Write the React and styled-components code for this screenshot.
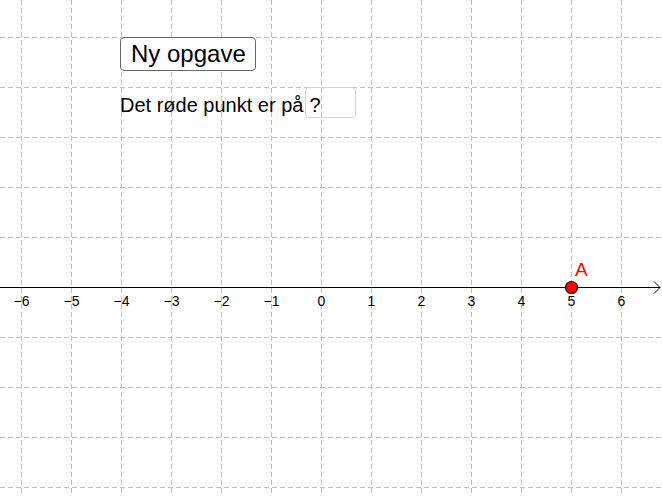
import React from "react";
import styled, { createGlobalStyle } from "styled-components";

const Global = createGlobalStyle`
  html, body { margin: 0; padding: 0; background: #ffffff; }
  body { font-family: "Liberation Sans", Arial, sans-serif; }
`;

const Applet = styled.div`
  position: relative;
  width: 662px;
  height: 496px;
  overflow: hidden;
  background: #ffffff;
`;

const Canvas = styled.svg`
  display: block;
  width: 662px;
  height: 496px;
`;

const Controls = styled.div`
  position: absolute;
  left: 120px;
  top: 37px;
  display: flex;
  flex-direction: column;
  align-items: flex-start;
  gap: 16px;
`;

const Button = styled.button`
  box-sizing: border-box;
  height: 34px;
  padding: 0 9px 0 10px;
  border: 1px solid #666666;
  border-radius: 4px;
  background: #ffffff;
  color: #000000;
  font-family: "Liberation Sans", Arial, sans-serif;
  font-size: 24px;
  line-height: 32px;
  cursor: pointer;
`;

const Row = styled.div`
  display: flex;
  align-items: flex-start;
`;

const Label = styled.span`
  font-size: 20px;
  line-height: 23px;
  margin-top: 7px;
  color: #000000;
  white-space: nowrap;
`;

const Field = styled.div`
  box-sizing: border-box;
  width: 51px;
  height: 31px;
  margin-left: 2px;
  padding: 6px 0 0 3px;
  border: 1px solid #d4d4d4;
  border-radius: 4px;
  font-size: 20px;
  line-height: 23px;
  color: #000000;
`;

const GRID = "#c0c0c0";
const xs = Array.from({ length: 13 }, (_, i) => 21 + 50 * i);
const ys = Array.from({ length: 10 }, (_, i) => 37 + 50 * i);
const nums = Array.from({ length: 13 }, (_, i) => i - 6);

export default function App() {
  return (
    <>
      <Global />
      <Applet>
        <Canvas viewBox="0 0 662 496" xmlns="http://www.w3.org/2000/svg">
          {xs.map((x) => (
            <line key={"v" + x} x1={x + 0.5} y1={0} x2={x + 0.5} y2={496}
              stroke={GRID} strokeWidth="1" strokeDasharray="5 3" />
          ))}
          {ys.map((y) => (
            <line key={"h" + y} x1={0} y1={y + 0.5} x2={662} y2={y + 0.5}
              stroke={GRID} strokeWidth="1" strokeDasharray="5 3" />
          ))}
          <line x1={0} y1={287.5} x2={660} y2={287.5} stroke="#000" strokeWidth="1" />
          <polyline points="654,281.5 660,287.5 654,293.5" fill="none" stroke="#000" strokeWidth="1" />
          {nums.map((n, i) => (
            <text key={n} x={21.5 + 50 * i} y={306} textAnchor="middle"
              fontFamily="Liberation Sans, Arial, sans-serif" fontSize="14" fill="#000">
              {n < 0 ? "\u2212" + Math.abs(n) : String(n)}
            </text>
          ))}
          <circle cx={571.5} cy={287.5} r={6} fill="#ff0000" stroke="#330000" strokeWidth="1.2" />
          <text x={575} y={276} fontFamily="Liberation Sans, Arial, sans-serif" fontSize="19" fill="#ff0000">A</text>
        </Canvas>
        <Controls>
          <Button type="button">Ny opgave</Button>
          <Row>
            <Label>Det røde punkt er på</Label>
            <Field>?</Field>
          </Row>
        </Controls>
      </Applet>
    </>
  );
}
